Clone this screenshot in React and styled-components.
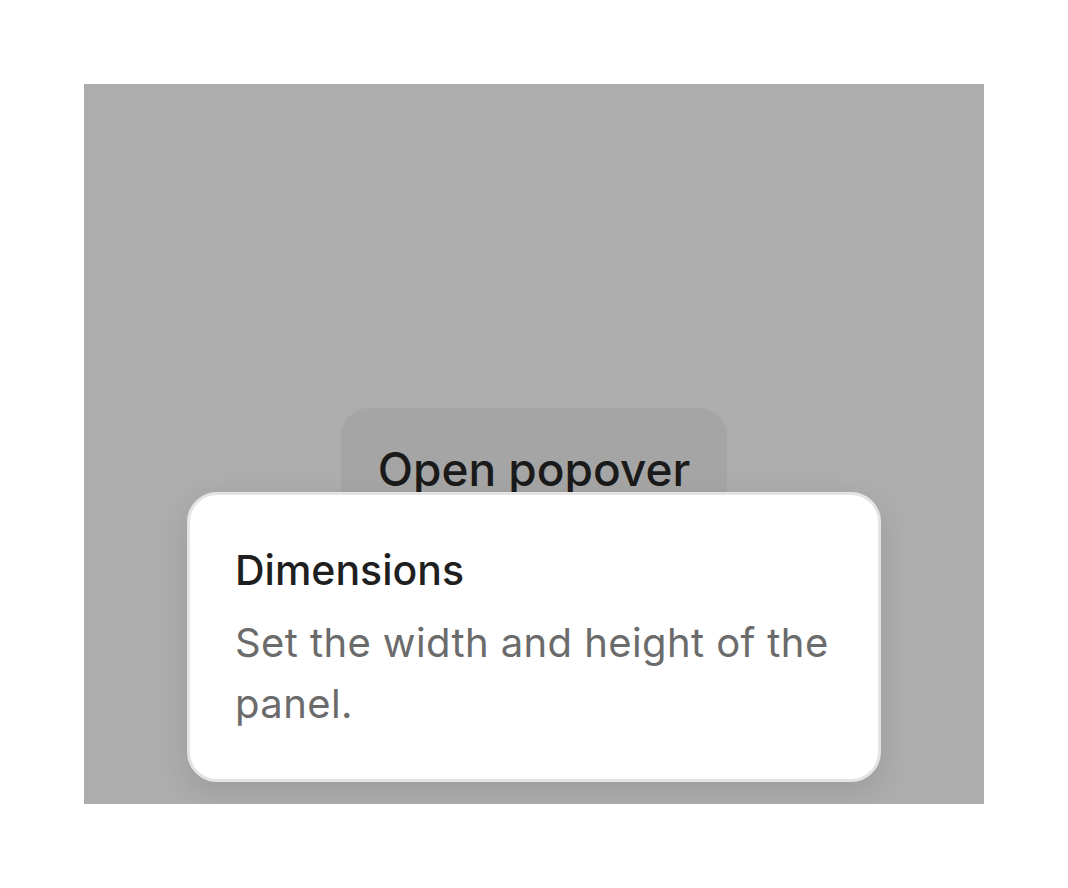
import styled, { createGlobalStyle } from 'styled-components';

const GlobalStyle = createGlobalStyle`
html, body {
  margin : 0 ;
  padding : 0 ;
  background : #ffffff ;
  font-family : Inter, "Noto Sans", "Liberation Sans", sans-serif ;
}
`;

const Page = styled.div`
width : 1068px ;
height : 888px ;
padding : 84px ;
box-sizing : border-box ;
`;

const Stage = styled.div`
width : 900px ;
height : 720px ;
background-color : #adadad ;
display : flex ;
justify-content : center ;
align-items : flex-start ;
padding-top : 324px ;
box-sizing : border-box ;
overflow : hidden ;
`;

const Anchor = styled.div`
position : relative ;
`;

const Trigger = styled.button`
height : 122px ;
padding : 0 37px ;
border : none ;
border-radius : 28px ;
background-color : #a5a5a5 ;
color : #1a1a1a ;
font-family : inherit ;
font-size : 46px ;
font-weight : 500 ;
cursor : pointer ;
`;

const Popover = styled.div`
position : absolute ;
top : 84px ;
left : 50% ;
transform : translateX(-50%) ;
width : 694px ;
box-sizing : border-box ;
padding : 51px 45px 45px ;
background-color : #ffffff ;
border : 3px solid #e4e4e4 ;
border-radius : 30px ;
box-shadow : 0 10px 30px rgba(0, 0, 0, 0.10) ;
`;

const Title = styled.div`
font-size : 41px ;
line-height : 48px ;
font-weight : 500 ;
color : #1f1f1f ;
`;

const Description = styled.p`
margin : 18px 0 0 ;
font-size : 40px ;
line-height : 61px ;
letter-spacing : 0.4px ;
color : #6b6b6b ;
`;

const App = () => {
    return (
        <Page>
            <GlobalStyle />
            <Stage>
                <Anchor>
                    <Trigger>Open popover</Trigger>
                    <Popover>
                        <Title>Dimensions</Title>
                        <Description>Set the width and height of the panel.</Description>
                    </Popover>
                </Anchor>
            </Stage>
        </Page>
    )
}

export default App
